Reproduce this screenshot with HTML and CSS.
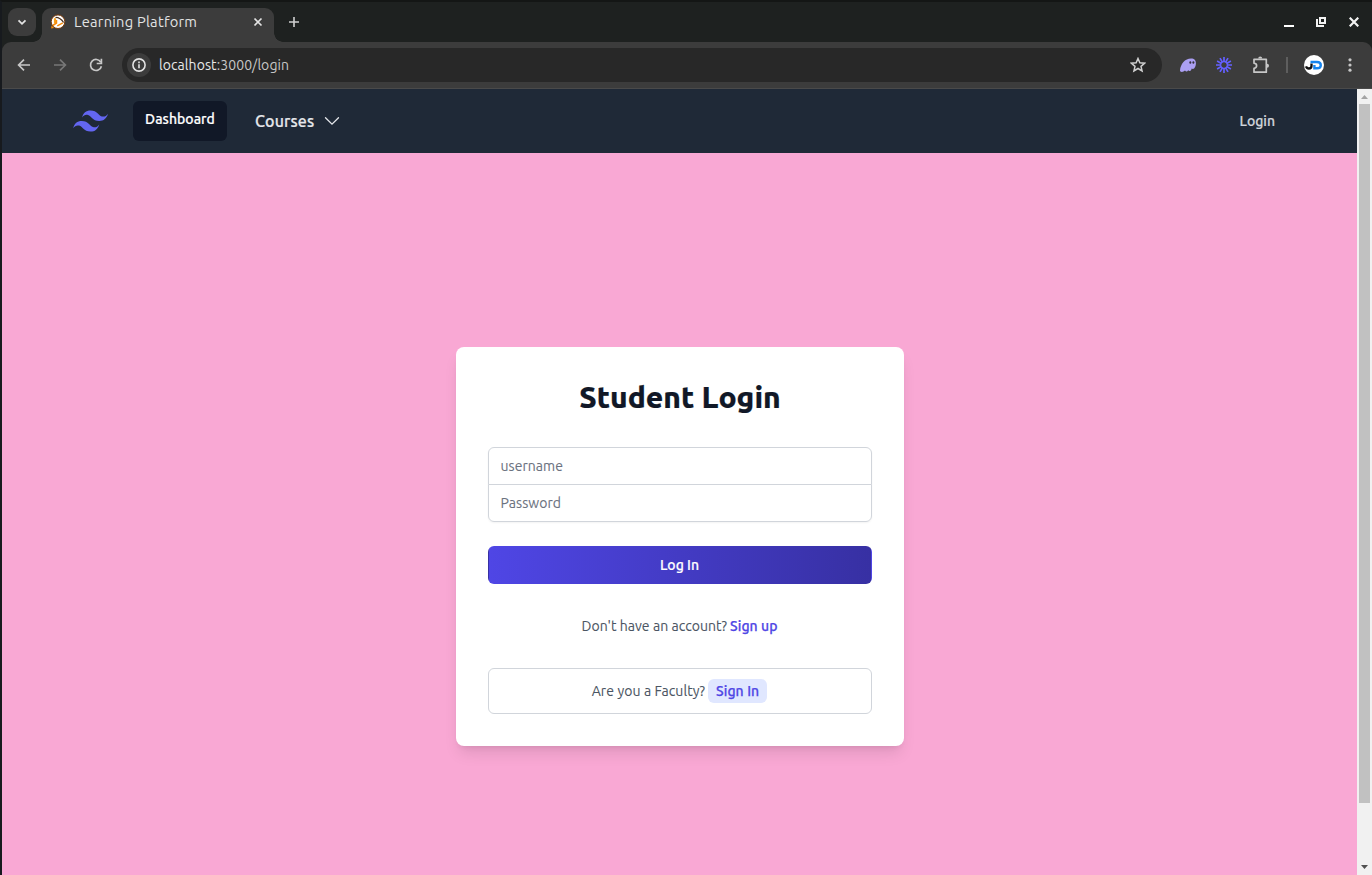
FILE: index.html
```
<!DOCTYPE html>
<html lang="en">
<head>
<meta charset="utf-8">
<title>Learning Platform</title>
<link rel="stylesheet" href="styles.css">
</head>
<body>
<div class="window">
  <header class="tabstrip">
    <button class="tab-search" aria-label="Search tabs"><svg width="28" height="28" viewBox="0 0 28 28"><path d="M10.500 12.300l3.500 3.500 3.500-3.500" fill="none" stroke="#e3e3e3" stroke-width="1.800"/></svg></button>
    <div class="tab">
      <svg class="favicon" width="16" height="16" viewBox="0 0 16 16"><path d="M1.500 11.500L1.200 14.500l3-.5z" fill="#f58a0a"/><circle cx="8" cy="7.700" r="6.800" fill="#fff" stroke="#7a3c0c" stroke-width="1"/><path d="M5.500 3.300Q10.500 3.300 13.600 8.500" fill="none" stroke="#4a3020" stroke-width="1.300"/><path d="M5 4.200v5" stroke="#f9a11b" stroke-width="2.200"/><path d="M2.700 11.500L6.500 9V6M7.300 11.800l5.500-3" fill="none" stroke="#f58a0a" stroke-width="1.500"/></svg>
      <span class="tab-title">Learning Platform</span>
      <svg class="tab-close" width="10" height="10" viewBox="0 0 10 10"><path d="M1.500 1.500l7 7M8.500 1.500l-7 7" stroke="#e3e3e3" stroke-width="1.700"/></svg>
    </div>
    <svg class="new-tab" width="12" height="12" viewBox="0 0 12 12"><path d="M6 1v10M1 6h10" stroke="#d0d0d0" stroke-width="1.600"/></svg>
    <div class="window-controls">
      <svg width="10" height="10" viewBox="0 0 10 10"><path d="M0 8h10v2H0z" fill="#fff"/></svg>
      <svg width="10" height="10" viewBox="0 0 10 10"><path d="M4 1h5v5H4zM1 2v7h7" fill="none" stroke="#f2f2f2" stroke-width="2"/></svg>
      <svg class="close" width="10" height="10" viewBox="0 0 10 10"><path d="M.7.7l8.600 8.600M9.300.7L.7 9.300" stroke="#f2f2f2" stroke-width="2.200"/></svg>
    </div>
  </header>
  <div class="toolbar">
    <div class="history">
      <svg width="16" height="16" viewBox="0 0 16 16"><path d="M14 8H3M8 2.600L2.600 8 8 13.400" fill="none" stroke="#c7c7c7" stroke-width="1.700"/></svg>
      <svg width="16" height="16" viewBox="0 0 16 16"><path d="M2 8h11M8 2.600L13.400 8 8 13.400" fill="none" stroke="#777" stroke-width="1.700"/></svg>
      <svg width="16" height="16" viewBox="0 0 16 16"><path d="M12.800 5.200A5.500 5.500 0 1 0 13.400 9.200" fill="none" stroke="#c7c7c7" stroke-width="1.700"/><path d="M13.400 1.800v4.700H8.700" fill="none" stroke="#c7c7c7" stroke-width="1.700"/></svg>
    </div>
    <div class="omnibox">
      <span class="site-info"><svg width="14" height="14" viewBox="0 0 14 14"><circle cx="7" cy="7" r="6.100" fill="none" stroke="#e3e3e3" stroke-width="1.600"/><path d="M7 6.200v4M7 3.600v1.600" stroke="#e3e3e3" stroke-width="1.600"/></svg></span>
      <span class="url"><span class="host">localhost</span>:3000/login</span>
      <svg class="star" width="16" height="16" viewBox="0 0 16 16"><path d="M8 1.500l1.850 4.350 4.700.4-3.550 3.100 1.050 4.600L8 11.500l-4.050 2.450L5 9.350 1.450 6.250l4.700-.4z" fill="none" stroke="#d0d0d0" stroke-width="1.500"/></svg>
    </div>
    <svg class="ext" width="16" height="16" viewBox="0 0 16 16"><path d="M0 13.500C.5 7 5 1.500 11 1.500c4.500 0 5.700 3.500 4.500 7.500-1 3-2.500 3.500-3.800 2.500-.8 3-2.700 3-3.500 1.700-1 1.800-2.500 1.600-3.200.3C3.500 15.300 0 15.500 0 13.500z" fill="#ab9ff2"/><ellipse cx="10.300" cy="5.500" rx="1" ry="1.300" fill="#35313e"/><ellipse cx="13.400" cy="5.500" rx="1" ry="1.300" fill="#35313e"/></svg>
    <svg class="ext" width="16" height="16" viewBox="0 0 16 16"><g stroke="#6460ff" stroke-width="1.700"><path d="M8 0v5M8 11v5M0 8h5M11 8h5M4 1.100l2.500 4.300M9.500 10.600l2.500 4.300M12 1.100L9.500 5.400M6.500 10.600L4 14.900M1.100 4l4.300 2.500M10.600 9.500l4.300 2.500M1.100 12l4.300-2.500M10.600 6.500L14.900 4"/><circle cx="8" cy="8" r="3.300" fill="none" stroke-width="1.300"/></g></svg>
    <svg class="ext" width="18" height="18" viewBox="0 0 18 18"><path d="M2 3.300h12.300v12.900H2v-3.800q2.600-.4 2.600-2.600T2 7.200z" fill="none" stroke="#c7c7c7" stroke-width="1.700" stroke-linejoin="round"/><path d="M6.200 2.500a2 2 0 0 1 4 0zM15 7.800a2 2 0 0 1 0 4z" fill="#c7c7c7"/></svg>
    <span class="divider"></span>
    <svg class="avatar" width="20" height="20" viewBox="0 0 20 20"><circle cx="10" cy="10" r="10" fill="#fff"/><path d="M7.500 8.500v2.500q0 2.500-2.700 2.500-2 0-2.800-2.200" fill="none" stroke="#111" stroke-width="2.300"/><path d="M6.500 7H13q3.800.2 3.800 3.200T13 13.300h-2.600V10" fill="none" stroke="#1684ee" stroke-width="2.400"/></svg>
    <svg class="kebab" width="4" height="14" viewBox="0 0 4 14"><g fill="#c7c7c7"><circle cx="2" cy="1.800" r="1.600"/><circle cx="2" cy="7" r="1.600"/><circle cx="2" cy="12.200" r="1.600"/></g></svg>
  </div>
  <div class="viewport">
    <div class="page">
      <nav class="navbar">
        <svg class="brand" width="36" height="24" viewBox="0 0 36 24"><path id="wave" d="M9 8.500C10.200 3.900 13 1.400 17.500 1.400c7 0 8 5.200 11.300 6 2.400.6 4.500-.2 6.200-2.700-1.400 4.700-4.200 7.200-8.700 7.200-7 0-8-5.200-11.300-6-2.400-.6-4.300.2-6 2.600z" fill="#6366f1"/><use href="#wave" x="-8.800" y="10.700"/></svg>
        <a class="nav-link active">Dashboard</a>
        <a class="nav-menu"><span>Courses</span><svg width="16" height="16" viewBox="0 0 16 16"><path d="M1.500 4.700L8 11.200l6.500-6.500" fill="none" stroke="#e5e7eb" stroke-width="1.300" stroke-linecap="round"/></svg></a>
        <a class="nav-login">Login</a>
      </nav>
      <main class="main">
        <form class="card">
          <h1 class="title">Student Login</h1>
          <div class="fields">
            <input class="field" type="text" placeholder="username">
            <input class="field" type="password" placeholder="Password">
          </div>
          <button class="submit" type="button"><span>Log In</span></button>
          <p class="signup"><span>Don't have an account?</span><a class="link">Sign up</a></p>
          <div class="faculty"><span>Are you a Faculty?</span><a class="pill">Sign In</a></div>
        </form>
      </main>
    </div>
    <div class="scrollbar">
      <svg width="15" height="15" viewBox="0 0 15 15"><path d="M4 10h7L7.500 6z" fill="#a3a3a3"/></svg>
      <div class="thumb"></div>
      <svg width="15" height="15" viewBox="0 0 15 15"><path d="M4 5h7L7.500 9z" fill="#505050"/></svg>
    </div>
  </div>
</div>
</body>
</html>
```
FILE: styles.css
```
* { box-sizing: border-box; }
body { margin: 0; font-family: Ubuntu, "Noto Sans", sans-serif; font-size: 14px; line-height: 20px; white-space: nowrap; overflow: hidden; }
svg { display: block; flex: none; }
button { font: inherit; border: 0; padding: 0; }
.window { height: 875px; display: flex; flex-direction: column; background: #1e2120; border-top: 2px solid #141615; border-left: 2px solid #171a1e; }
.tabstrip { height: 40px; display: flex; align-items: center; flex: none; padding: 0 13px 0 6px; }
.tab-search { width: 28px; height: 28px; border-radius: 9px; background: #3c3c3c; }
.tab { position: relative; width: 232px; height: 34px; margin: 6px 0 0 6px; padding: 0 11px 6px 8px; background: #3c3c3c; border-radius: 9px 9px 0 0; display: flex; align-items: center; }
.tab::before, .tab::after { content: ""; position: absolute; bottom: 0; width: 9px; height: 9px; }
.tab::before { left: -9px; background: radial-gradient(circle at 0 0, transparent 8.5px, #3c3c3c 9px); }
.tab::after { right: -9px; background: radial-gradient(circle at 100% 0, transparent 8.5px, #3c3c3c 9px); }
.tab-title { margin-left: 8px; color: #e3e3e3; font-size: 14.67px; letter-spacing: .25px; }
.tab-close { margin-left: auto; }
.new-tab { margin-left: 14px; }
.window-controls { margin-left: auto; display: flex; gap: 22px; }
.close { margin-left: 1px; }
.toolbar { height: 47px; flex: none; background: #3c3c3c; border-bottom: 1px solid #4a4a4a; border-radius: 9px 9px 0 0; display: flex; align-items: center; }
.history { display: flex; gap: 20px; margin-left: 14px; }
.omnibox { margin-left: 18px; width: 1040px; height: 34px; border-radius: 17px; background: #282828; display: flex; align-items: center; padding: 0 16px 0 5px; }
.site-info { width: 24px; height: 24px; border-radius: 12px; background: #3c3c3c; display: flex; align-items: center; justify-content: center; }
.url { margin-left: 8px; color: #c7c7c7; letter-spacing: .08px; }
.host { color: #e8e8e8; }
.star { margin-left: auto; }
.ext { margin-left: 18px; }
.ext + .ext { margin-left: 20px; }
.divider { width: 2px; height: 16px; background: #5e5e5e; margin-left: 16px; }
.avatar { margin-left: 16px; }
.kebab { margin-left: 24px; }
.viewport { flex: 1; display: flex; min-height: 0; }
.page { flex: 1; display: flex; flex-direction: column; background: #f9a8d4; }
.navbar { height: 64px; flex: none; background: #1f2937; display: flex; align-items: center; padding: 0 82px 0 71px; font-weight: 500; -webkit-text-stroke: .2px; }
.nav-link { height: 40px; width: 94px; margin-left: 24px; padding-top: 8px; border-radius: 6px; background: #111827; color: #fff; text-align: center; letter-spacing: .04px; }
.nav-menu { margin-left: 28px; display: flex; align-items: center; gap: 10px; font-size: 16px; letter-spacing: .13px; color: #e5e7eb; }
.nav-login { margin-left: auto; color: #d1d5db; }
.main { flex: 1; padding: 194px 0 0 454px; }
.card { width: 448px; height: 399px; padding: 32px; background: #fff; border-radius: 8px; box-shadow: 0 10px 15px -3px rgba(0,0,0,.1), 0 4px 6px -4px rgba(0,0,0,.1); }
.title { margin: 0 0 32px; font-size: 30px; line-height: 36px; font-weight: 800; color: #111827; text-align: center; -webkit-text-stroke: .2px; }
.fields { display: flex; flex-direction: column; border-radius: 6px; box-shadow: 0 1px 2px rgba(0,0,0,.05); }
.field { height: 38px; border: 1px solid #d1d5db; padding: 0 11.500px; font: inherit; letter-spacing: .05px; background: #fff; border-radius: 6px 6px 0 0; }
.field + .field { margin-top: -1px; border-radius: 0 0 6px 6px; }
.field::placeholder { color: #6b7280; opacity: 1; -webkit-text-stroke: .1px; }
.submit { display: block; width: 384px; height: 38px; margin-top: 24px; padding-right: 1px; border: 1px solid transparent; border-radius: 6px; background: linear-gradient(to right, #4f46e5, #3730a3); color: #fff; font-weight: 500; -webkit-text-stroke: .2px; }
.signup { margin: 32px 0; padding-right: 1px; display: flex; justify-content: center; gap: 3px; color: #4b5563; letter-spacing: .05px; -webkit-text-stroke: .1px; }
.faculty { height: 46px; padding-right: 1px; border: 1px solid #d1d5db; border-radius: 6px; display: flex; align-items: center; justify-content: center; gap: 3px; color: #4b5563; letter-spacing: .1px; -webkit-text-stroke: .1px; }
.link, .pill { color: #4f46e5; font-weight: 500; -webkit-text-stroke: .25px; }
.pill { height: 24px; line-height: 24px; padding: 0 8px; border-radius: 6px; background: #e0e7ff; }
.scrollbar { width: 15px; background: #f1f1f1; display: flex; flex-direction: column; }
.thumb { width: 11px; height: 699px; margin: 0 2px auto; background: #c1c1c1; }
```
